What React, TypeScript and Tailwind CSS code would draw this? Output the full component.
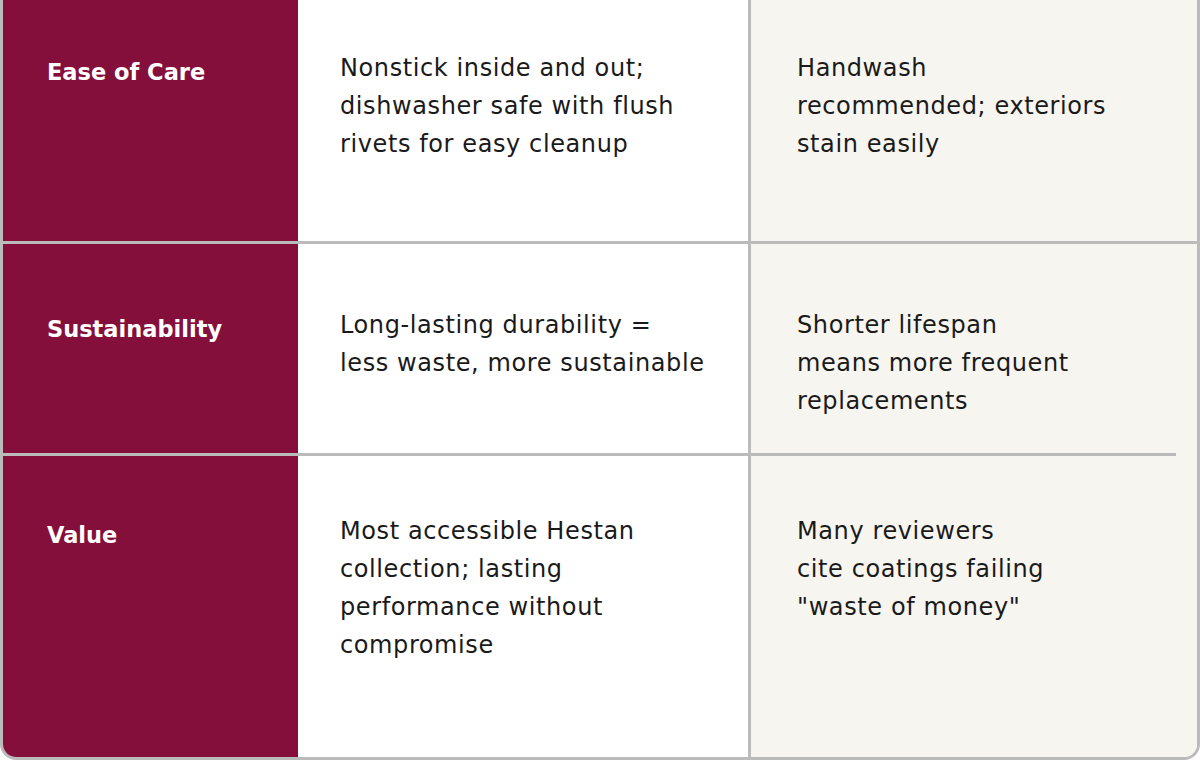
import React from 'react';

interface Row {
  label: string;
  ours: string[];
  theirs: string[];
  height: string;
  pad: string;
  labelPad: string;
}

const rows: Row[] = [
  {
    label: 'Ease of Care',
    ours: ['Nonstick inside and out;', 'dishwasher safe with flush', 'rivets for easy cleanup'],
    theirs: ['Handwash', 'recommended; exteriors', 'stain easily'],
    height: 'h-[241px]',
    pad: 'pt-[49px]',
    labelPad: 'pt-[53px]'
  },
  {
    label: 'Sustainability',
    ours: ['Long-lasting durability =', 'less waste, more sustainable'],
    theirs: ['Shorter lifespan', 'means more frequent', 'replacements'],
    height: 'h-[209px]',
    pad: 'pt-[62px]',
    labelPad: 'pt-[66px]'
  },
  {
    label: 'Value',
    ours: ['Most accessible Hestan', 'collection; lasting', 'performance without', 'compromise'],
    theirs: ['Many reviewers', 'cite coatings failing', '"waste of money"'],
    height: 'h-[301px]',
    pad: 'pt-[56px]',
    labelPad: 'pt-[60px]'
  }
];

const Lines = ({ lines }: { lines: string[] }) => (
  <>
    {lines.map(l => (
      <span key={l} className="block whitespace-nowrap">{l}</span>
    ))}
  </>
);

export default function App() {
  return (
    <div className="w-[1200px] h-[760px] bg-white font-['DejaVu_Sans',sans-serif]">
      <div className="h-full flex flex-col border-x-[3px] border-b-[3px] border-[#bbbbbb] rounded-b-[16px] overflow-hidden">
        {rows.map((row, i) => (
          <React.Fragment key={row.label}>
            <div className={`flex ${row.height}`}>
              <div className={`w-[295px] bg-[#850f3b] pl-[44px] ${row.labelPad}`}>
                <span className="text-[22.5px] leading-[38px] font-bold text-white">{row.label}</span>
              </div>
              <div className={`w-[450px] bg-white pl-[42px] text-[24px] leading-[38px] tracking-[0.6px] text-[#1a1a1a] ${row.pad}`}>
                <Lines lines={row.ours} />
              </div>
              <div className="w-[3px] bg-[#bbbbbb]" />
              <div className={`flex-1 bg-[#f7f5f0] pl-[46px] text-[24px] leading-[38px] tracking-[0.6px] text-[#1a1a1a] ${row.pad}`}>
                <Lines lines={row.theirs} />
              </div>
            </div>
            {i === 0 && <div className="h-[3px] bg-[#bbbbbb]" />}
            {i === 1 && (
              <div className="flex h-[3px]">
                <div className="w-[1173px] bg-[#bbbbbb]" />
                <div className="flex-1 bg-[#f7f5f0]" />
              </div>
            )}
          </React.Fragment>
        ))}
      </div>
    </div>
  );
}
